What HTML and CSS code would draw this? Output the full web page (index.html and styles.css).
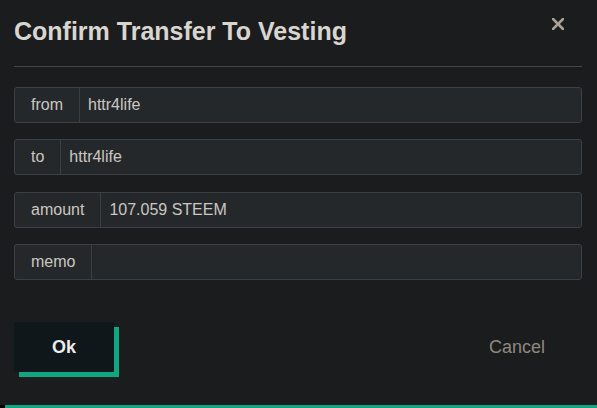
FILE: index.html
```html
<!DOCTYPE html>
<html lang="en">
<head>
    <meta charset="UTF-8">
    <title>Confirm Transfer To Vesting</title>
    <link rel="stylesheet" href="styles.css">
</head>
<body>
    <div class="modal">
        <button class="close" type="button" aria-label="Close">
            <svg width="12" height="12" viewBox="0 0 12 12">
                <path d="M1 1L11 11M11 1L1 11" stroke="#a9a397" stroke-width="2.6" stroke-linecap="square"/>
            </svg>
        </button>
        <div class="modal-header">
            <h1 class="title">Confirm Transfer To Vesting</h1>
        </div>
        <div class="modal-body">
            <div class="input-group">
                <span class="addon">from</span>
                <div class="field">httr4life</div>
            </div>
            <div class="input-group">
                <span class="addon">to</span>
                <div class="field">httr4life</div>
            </div>
            <div class="input-group">
                <span class="addon">amount</span>
                <div class="field">107.059 STEEM</div>
            </div>
            <div class="input-group">
                <span class="addon">memo</span>
                <div class="field"></div>
            </div>
        </div>
        <div class="modal-footer">
            <button class="btn-ok" type="button">Ok</button>
            <button class="btn-cancel" type="button">Cancel</button>
        </div>
    </div>
    <div class="modal-edge"></div>
</body>
</html>
```

FILE: styles.css
```css
html, body{
    margin: 0;
    padding: 0;
}
body{
    background: #000;
    font-family: "Liberation Sans", Arial, sans-serif;
    overflow: hidden;
}
.modal{
    position: relative;
    height: 405px;
    box-sizing: border-box;
    background: #1b1c1e;
    padding: 0 15px 0 14px;
}
/* green offset edge under the dialog */
.modal-edge{
    height: 5px;
    margin-left: 5px;
    background: #0fa681;
}
.close{
    position: absolute;
    top: 18px;
    right: 33px;
    width: 12px;
    height: 12px;
    padding: 0;
    border: 0;
    background: none;
    cursor: pointer;
}
.close svg{
    display: block;
}
.modal-header{
    padding: 16px 0 20px 0;
    border-bottom: 1px solid #444649;
}
.title{
    margin: 0;
    font-size: 25px;
    line-height: 30px;
    font-weight: bold;
    color: #d9d5cf;
}
.modal-body{
    padding-top: 20px;
    display: flex;
    flex-direction: column;
    gap: 16.4px;
}
.input-group{
    display: flex;
    height: 36px;
    box-sizing: border-box;
    border: 1px solid #3c3f43;
    border-radius: 3px;
    background: #25282b;
    font-size: 16px;
    color: #cbc7c0;
}
.addon{
    display: flex;
    align-items: center;
    padding: 0 16px;
    border-right: 1px solid #3c3f43;
}
.field{
    flex: 1;
    display: flex;
    align-items: center;
    padding: 0 8px;
}
.modal-footer{
    display: flex;
    justify-content: space-between;
    align-items: center;
    margin-top: 42px;
}
.btn-ok{
    width: 100px;
    height: 50px;
    border: 0;
    background: #0f171a;
    box-shadow: 5px 5px 0 0 #0fa681;
    color: #ececec;
    font-family: "Liberation Sans", Arial, sans-serif;
    font-size: 18px;
    font-weight: bold;
    cursor: pointer;
}
.btn-cancel{
    height: 50px;
    border: 0;
    background: none;
    padding: 0 37px 0 20px;
    color: #8f897f;
    font-family: "Liberation Sans", Arial, sans-serif;
    font-size: 18px;
    cursor: pointer;
}
```
